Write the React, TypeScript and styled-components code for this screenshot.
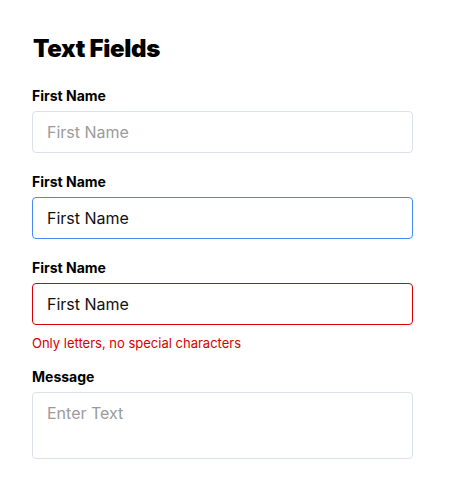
import React from "react";
import styled, { createGlobalStyle } from "styled-components";

const Global = createGlobalStyle`
  html, body { margin: 0; padding: 0; background: #ffffff; }
  body { font-family: Inter, "Noto Sans", sans-serif; color: #111111; }
  * { box-sizing: border-box; }
`;

const Page = styled.div`
  width: 451px;
  padding: 33px 38px 30px 32px;
  display: flex;
  flex-direction: column;
`;

const Title = styled.h1`
  margin: 0 0 21px 1px;
  font-size: 24px;
  line-height: 32px;
  font-weight: 900;
  letter-spacing: -0.3px;
  color: #000;
`;

const Field = styled.div<{ $gapAfter: number }>`
  display: flex;
  flex-direction: column;
  margin-bottom: ${(p) => p.$gapAfter}px;
`;

const Label = styled.label`
  font-size: 14px;
  line-height: 20px;
  font-weight: 700;
  color: #000;
  margin-bottom: 5px;
`;

type State = "default" | "focus" | "error";

const borderFor = (s: State) =>
  s === "focus" ? "#4a89f3" : s === "error" ? "#d60000" : "#dce1e9";

const Input = styled.input<{ $state: State }>`
  height: 42px;
  width: 100%;
  border: 1px solid ${(p) => borderFor(p.$state)};
  border-radius: 4px;
  padding: 0 14px;
  font-family: Inter, "Noto Sans", sans-serif;
  font-size: 16px;
  color: #111;
  background: #fff;
  outline: none;
  &::placeholder { color: #9b9b9b; }
`;

const TextArea = styled.textarea`
  height: 67px;
  width: 100%;
  border: 1px solid #dce1e9;
  border-radius: 4px;
  padding: 10px 14px;
  font-family: Inter, "Noto Sans", sans-serif;
  font-size: 16px;
  line-height: 20px;
  color: #111;
  resize: none;
  outline: none;
  &::placeholder { color: #9b9b9b; }
`;

const ErrorText = styled.div`
  margin-top: 9px;
  font-size: 13px;
  line-height: 18px;
  color: #d60000;
`;

export default function App() {
  return (
    <>
      <Global />
      <Page>
        <Title>Text Fields</Title>
        <Field $gapAfter={19}>
          <Label>First Name</Label>
          <Input $state="default" placeholder="First Name" readOnly />
        </Field>
        <Field $gapAfter={19}>
          <Label>First Name</Label>
          <Input $state="focus" defaultValue="First Name" />
        </Field>
        <Field $gapAfter={15}>
          <Label>First Name</Label>
          <Input $state="error" defaultValue="First Name" />
          <ErrorText>Only letters, no special characters</ErrorText>
        </Field>
        <Field $gapAfter={0}>
          <Label>Message</Label>
          <TextArea placeholder="Enter Text" />
        </Field>
      </Page>
    </>
  );
}
